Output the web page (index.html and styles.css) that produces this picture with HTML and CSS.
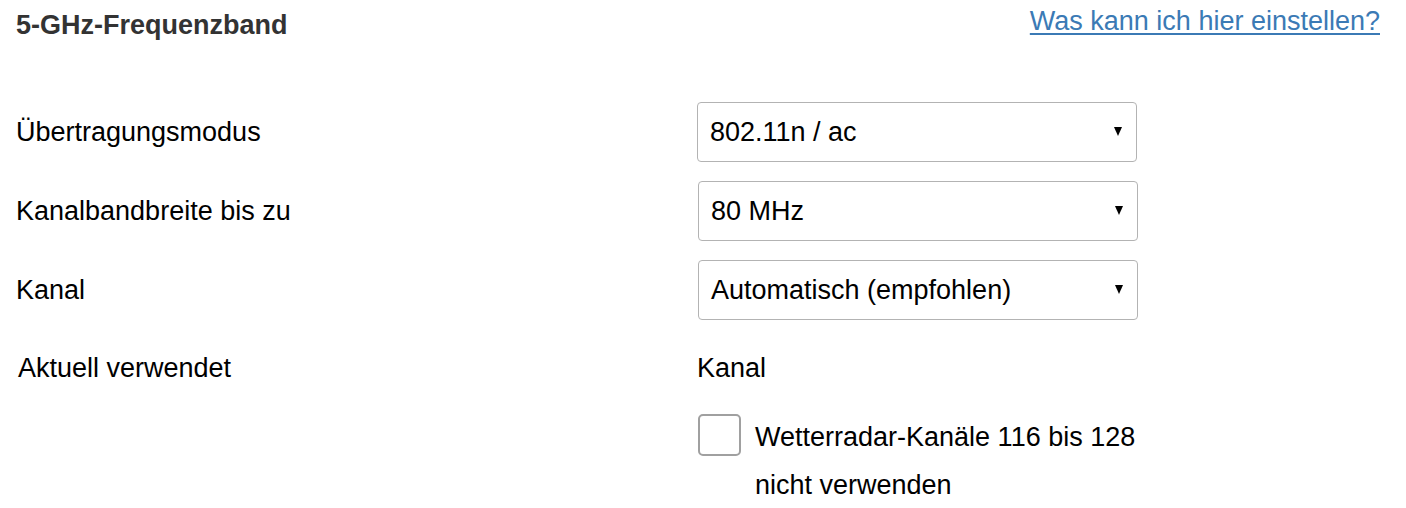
FILE: index.html
```html
<!DOCTYPE html>
<html lang="de">
<head>
<meta charset="utf-8">
<link rel="stylesheet" href="styles.css">
</head>
<body>
<div class="page">
  <div class="header">
    <h2 class="title">5-GHz-Frequenzband</h2>
    <a class="help" href="#">Was kann ich hier einstellen?</a>
  </div>
  <div class="form">
    <div class="row">
      <label class="label">Übertragungsmodus</label>
      <div class="select"><span>802.11n / ac</span><span class="arrow"></span></div>
    </div>
    <div class="row">
      <label class="label">Kanalbandbreite bis zu</label>
      <div class="select shifted"><span>80 MHz</span><span class="arrow"></span></div>
    </div>
    <div class="row">
      <label class="label">Kanal</label>
      <div class="select shifted"><span>Automatisch (empfohlen)</span><span class="arrow"></span></div>
    </div>
    <div class="row info">
      <span class="label label-info">Aktuell verwendet</span>
      <span class="value">Kanal</span>
    </div>
    <div class="row check-row">
      <span class="label"></span>
      <div class="check">
        <span class="box"></span>
        <span class="check-text">Wetterradar-Kanäle 116 bis 128<br>nicht verwenden</span>
      </div>
    </div>
  </div>
</div>
</body>
</html>
```
FILE: styles.css
```css
html, body {
  margin: 0;
  padding: 0;
  background: #fff;
}
body {
  font-family: "Liberation Sans", Arial, sans-serif;
  color: #000;
}
.page {
  width: 1406px;
  height: 508px;
  box-sizing: border-box;
  padding: 0 26px 0 16px;
  overflow: hidden;
}
.header {
  display: flex;
  justify-content: space-between;
  align-items: flex-start;
  height: 102px;
}
.title {
  margin: 10px 0 0 0;
  font-size: 27px;
  line-height: 30px;
  font-weight: bold;
  color: #333;
}
.help {
  margin-top: 6px;
  font-size: 27px;
  line-height: 30px;
  color: #3b7ab5;
  text-decoration: underline;
  text-decoration-thickness: 2px;
  text-underline-offset: 3px;
}
.form {
  display: flex;
  flex-direction: column;
  gap: 19px;
}
.row {
  display: grid;
  grid-template-columns: 681px 440px;
  align-items: center;
}
.label {
  font-size: 27px;
  line-height: 30px;
}
.select {
  height: 60px;
  box-sizing: border-box;
  border: 1px solid #b3b3b3;
  border-radius: 4px;
  display: flex;
  align-items: center;
  justify-content: space-between;
  padding: 0 14px 0 12px;
  font-size: 27px;
}
.select.shifted {
  margin-left: 1px;
  margin-right: -1px;
}
.arrow {
  width: 0;
  height: 0;
  border-left: 4.5px solid transparent;
  border-right: 4.5px solid transparent;
  border-top: 9px solid #000;
  margin-top: -2px;
}
.info {
  margin-top: 14px;
}
.info .label-info {
  padding-left: 2px;
}
.value {
  font-size: 27px;
  line-height: 30px;
}
.check-row {
  margin-top: 11px;
  align-items: start;
}
.check {
  display: flex;
  align-items: flex-start;
  gap: 14px;
}
.box {
  flex: none;
  width: 43px;
  height: 42px;
  box-sizing: border-box;
  border: 2px solid #a0a0a0;
  border-radius: 5px;
  margin-left: 1px;
  margin-top: 1px;
}
.check-text {
  font-size: 27px;
  line-height: 48px;
}
```
